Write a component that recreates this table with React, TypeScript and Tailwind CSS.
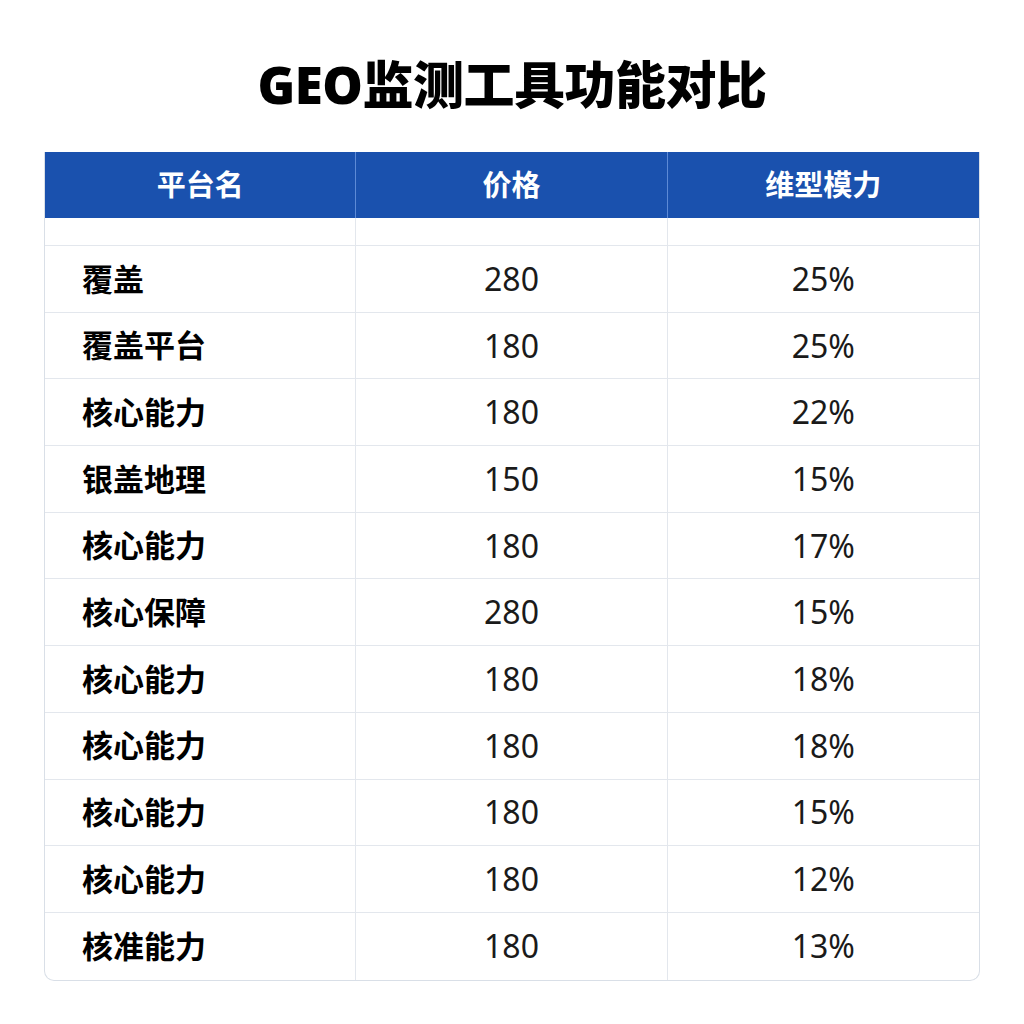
const rows = [
  { name: "覆盖", price: "280", share: "25%" },
  { name: "覆盖平台", price: "180", share: "25%" },
  { name: "核心能力", price: "180", share: "22%" },
  { name: "银盖地理", price: "150", share: "15%" },
  { name: "核心能力", price: "180", share: "17%" },
  { name: "核心保障", price: "280", share: "15%" },
  { name: "核心能力", price: "180", share: "18%" },
  { name: "核心能力", price: "180", share: "18%" },
  { name: "核心能力", price: "180", share: "15%" },
  { name: "核心能力", price: "180", share: "12%" },
  { name: "核准能力", price: "180", share: "13%" },
];

const font = "font-['Noto_Sans','Noto_Sans_CJK_SC',sans-serif]";

export default function App() {
  return (
    <div className={`w-[1024px] h-[1024px] bg-white ${font} text-[#111]`}>
      <h1 className="pt-[52px] h-[152px] text-center text-[51px] leading-[64px] font-black tracking-[-0.5px] text-black">
        GEO监测工具功能对比
      </h1>

      <div className="mx-[44px] w-[936px] border border-t-0 border-[#d9dfe7] rounded-b-[10px] overflow-hidden">
        {/* Header */}
        <div className="grid grid-cols-3 h-[66px] bg-[#1a51ae] text-white text-[29px] font-bold">
          <div className="flex items-center justify-center border-r border-[#5d8ad6]">平台名</div>
          <div className="flex items-center justify-center border-r border-[#5d8ad6]">价格</div>
          <div className="flex items-center justify-center">维型模力</div>
        </div>

        {/* Spacer row */}
        <div className="grid grid-cols-3 h-[28px] border-b border-[#e3e7ed]">
          <div className="border-r border-[#e3e7ed]" />
          <div className="border-r border-[#e3e7ed]" />
          <div />
        </div>

        {rows.map((r, i) => (
          <div
            key={i}
            className={`grid grid-cols-3 h-[66.7px] ${i < rows.length - 1 ? "border-b border-[#e3e7ed]" : ""}`}
          >
            <div className="flex items-center pl-[37px] border-r border-[#e3e7ed] text-[31px] font-bold text-black">
              {r.name}
            </div>
            <div className="flex items-center justify-center border-r border-[#e3e7ed] text-[32px] text-[#1a1a1a]">
              {r.price}
            </div>
            <div className="flex items-center justify-center text-[32px] text-[#1a1a1a]">
              {r.share}
            </div>
          </div>
        ))}
      </div>
    </div>
  );
}
